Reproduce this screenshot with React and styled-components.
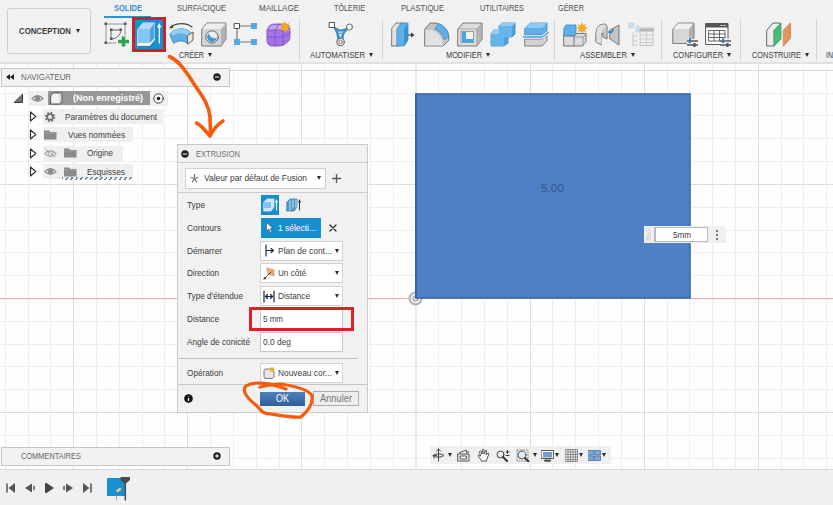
import React from "react";
import styled, { createGlobalStyle, css } from "styled-components";

const Global = createGlobalStyle`
  * { box-sizing: border-box; }
  html, body { margin: 0; padding: 0; overflow: hidden; }
  body { font-family: "Liberation Sans", Arial, sans-serif; font-size: 10px; color: #3c3c3c; }
  svg { display: block; flex: none; }
`;

/* ---------- text ---------- */

const FitBox = styled.span`
  display: block;
  flex: none;
  height: 12px;
  line-height: 12px;
  white-space: nowrap;
`;
const FitInner = styled.span`
  display: block;
  width: max-content;
  transform-origin: 0 50%;
  font-size: ${(p) => p.$size}px;
  font-weight: ${(p) => (p.$bold ? 700 : 400)};
  color: ${(p) => p.$color || "inherit"};
`;
const measure = (text, size, bold) => {
  const ctx = document.createElement("canvas").getContext("2d");
  ctx.font = `${bold ? "bold " : ""}${size}px "Liberation Sans"`;
  return ctx.measureText(text).width;
};
/* Label condensed to a set width */
const Label = ({ w, size = 9.4, bold, color, children }) => {
  const scale = w / measure(children, size, bold);
  return (
    <FitBox style={{ width: w }}>
      <FitInner $size={size} $bold={bold} $color={color} style={{ transform: `scaleX(${scale})` }}>
        {children}
      </FitInner>
    </FitBox>
  );
};

const Caret = styled.i`
  flex: none;
  width: 0;
  height: 0;
  border-left: 2.5px solid transparent;
  border-right: 2.5px solid transparent;
  border-top: 4px solid #2d2d2d;
`;

/* ---------- ribbon ---------- */

const Page = styled.div`
  position: relative;
  width: 833px;
  height: 505px;
  display: flex;
  flex-direction: column;
  overflow: hidden;
  background: #fff;
`;
const Ribbon = styled.header`
  flex: none;
  height: 64px;
  display: flex;
  background: #f1f1f1;
  border-bottom: 2px solid #e2e2e2;
  overflow: hidden;
`;
const Workspace = styled.button`
  flex: none;
  width: 84px;
  height: 46px;
  margin: 8px 9px 0 7px;
  padding: 0 0 0 11px;
  display: flex;
  align-items: center;
  gap: 5px;
  background: #f2f2f2;
  border: 1px solid #cfcfcf;
  border-radius: 3px;
  font-family: inherit;
  color: #3a3a3a;
`;
const RibbonMain = styled.div`
  flex: none;
  width: 733px;
  display: flex;
  flex-direction: column;
`;
const Tabs = styled.nav`
  display: flex;
  height: 18px;
  padding-left: 4px;
`;
const Tab = styled.div`
  flex: none;
  height: 18px;
  width: ${(p) => p.$w}px;
  padding: 2px 0 0 ${(p) => p.$pad}px;
  ${(p) => p.$on && css`border-bottom: 2px solid #2f95cc;`}
`;
const Groups = styled.div`
  display: flex;
  height: 44px;
`;
const Group = styled.section`
  flex: none;
  width: ${(p) => p.$w}px;
  display: flex;
  flex-direction: column;
  ${(p) => !p.$open && css`
    background: linear-gradient(#d4d4d4, #d4d4d4) no-repeat right 0 top 2px / 1px 40px;
  `}
`;
const Tools = styled.div`
  display: flex;
  height: 31px;
  padding-left: ${(p) => p.$pad}px;
  gap: ${(p) => p.$gap}px;
  align-items: center;
`;
const GroupName = styled.div`
  display: flex;
  align-items: center;
  gap: 4px;
  height: 12px;
  padding-left: ${(p) => p.$pad}px;
`;
const ActiveTool = styled.div`
  flex: none;
  width: 34px;
  height: 35px;
  margin: 1px -4px 0;
  display: flex;
  align-items: center;
  justify-content: center;
  background: #1590d0;
  border: 3px solid #cf1f27;
`;

const B = "#5fb0e8";
const BD = "#3c84bb";
const G = "#dcdcdc";
const GD = "#5d5d5d";

const Svg = ({ w = 26, h = 26, children }) => (
  <svg width={w} height={h} viewBox={`0 0 ${w} ${h}`} fill="none" strokeLinejoin="round" strokeLinecap="round">
    {children}
  </svg>
);

const SketchIcon = () => (
  <Svg w={26}>
    <path d="M3 3H22M3 3V22M22 3V14M3 22H13" stroke="#8b8b8b" strokeWidth=".9" />
    <path d="M8 9H18M8 9V18M18 9C17.500 14 14 18 8 18" stroke="#666" />
    {[[1.500, 1.500], [21, 1.500], [1.500, 20.500], [7, 7.500], [16.500, 7.500], [7, 16.500]].map(([x, y]) => (
      <rect key={`${x}-${y}`} x={x} y={y} width="2.500" height="2.500" fill="#555" />
    ))}
    <path d="M20.500 15.500V25.500M15 20.500H26" stroke="#2fa350" strokeWidth="3.600" strokeLinecap="butt" />
  </Svg>
);
const ExtrudeIcon = () => (
  <Svg w={28} h={29}>
    <path d="M3 9L8 3H19.500V20L15 26H3Z" fill="#f1f3f4" stroke="#dbe9f2" />
    <path d="M3 9L8 3H19.500V18L15 23H3Z" fill="#4fa3de" />
    <path d="M3 9L8 3H19.500L15 9Z" fill="#b4dcf6" />
    <path d="M3 9H15V23H3Z" fill="#82c6f2" />
    <path d="M3 26.500H15L20 20.500" stroke="#496f86" />
    <path d="M24.300 23V6" stroke="#fff" strokeWidth="1.300" />
    <path d="M22 7.500L24.300 3L26.600 7.500Z" fill="#fff" />
  </Svg>
);
const RevolveIcon = () => (
  <Svg>
    <path d="M2 13C7 6 19 6 24 13L20 23C16 19 11 19 6 22Z" fill={B} stroke={BD} />
    <path d="M2 13C7 6 19 6 24 13L20 15C16 11.500 10 11.500 6 14.500Z" fill="#92cdf4" />
    <path d="M19.500 14.500L25 11V19L20 23Z" fill="#e8e8e8" stroke={GD} />
    <path d="M3 6C9 1.500 18 1.500 24 6" stroke="#444" strokeWidth="1.200" />
    <path d="M1 7.500L4 3.500L5.500 7Z" fill="#444" />
  </Svg>
);
const HoleIcon = () => (
  <Svg>
    <path d="M1 8L6 2H25V18L20 25H1Z" fill="#d4d4d4" stroke="#777" />
    <path d="M1.500 8L6 2.500H24.500L20 8Z" fill="#ededed" />
    <path d="M20 8L24.500 3V18L20 24Z" fill="#b2b2b2" />
    <circle cx="11" cy="16" r="6.200" fill="#eee" stroke="#666" />
    <path d="M7.500 12.500A5 5 0 1 0 16 17C11.500 18 9.500 16 7.500 12.500Z" fill="#4298d5" />
  </Svg>
);
const PatternIcon = () => (
  <Svg>
    <path d="M4 5H22M4 5V21H22" stroke="#777" strokeWidth="1.200" />
    <rect x="1.500" y="2.500" width="5" height="5" fill="#fff" stroke="#555" />
    {[[18, 2], [1, 18], [18, 18]].map(([x, y]) => (
      <rect key={`${x}${y}`} x={x} y={y} width="6" height="6" fill="#55aae3" />
    ))}
  </Svg>
);
const star = "M0-6L1.500-2.600L4.300-4.300L2.900-1.300L6 0L2.900 1.300L4.300 4.300L1.500 2.900L0 6L-1.500 2.900L-4.300 4.300L-2.900 1.300L-6 0L-2.900-1.300L-4.300-4.300L-1.500-2.600Z";
const FormIcon = () => (
  <Svg>
    <path d="M1 9Q3 3 8 3H20Q24 4 24 8V17Q24 20 19 23Q17 25 12 25H5Q1 24 1 20Z" fill="#a272e6" stroke="#7c52b8" strokeWidth=".8" />
    <path d="M2 9Q4 4 8 4H19L16 9Z" fill="#c4a3f2" />
    <path d="M1 16H17L24 12M9 25V9L13 3M17 9V24M2 9H17L22 5" stroke="#7a4fc0" strokeWidth=".8" />
    <path d={star} transform="translate(19 6)" fill="#f5a623" />
  </Svg>
);
const AutomateIcon = () => (
  <Svg>
    <path d="M5 5Q9 9 9.500 13L11 21H14L15 13Q17 9 21 7Q16 9.500 12.500 9.500Q8 9 5 5Z" stroke="#3f8fc4" strokeWidth="2.200" fill="#a9d6f0" />
    <path d="M10.500 12.500H14.500L12.500 17Z" fill="#f1f1f1" stroke="#3f8fc4" strokeWidth=".8" />
    <rect x="1.500" y="1.500" width="5" height="5" fill="#fff" stroke="#555" />
    <circle cx="21.500" cy="6" r="3" fill="#fff" stroke="#666" />
    <circle cx="12.500" cy="21" r="3.800" fill="#ddd" stroke="#666" />
    <circle cx="12.500" cy="21" r="1.600" fill="#fff" stroke="#777" strokeWidth=".8" />
  </Svg>
);
const PressPullIcon = () => (
  <Svg>
    <path d="M1 7L5 2H12V19L8 25H1Z" fill="#e2e2e2" stroke={GD} strokeWidth=".8" />
    <path d="M6 8L10 2H17V19L13 25H6Z" fill={B} stroke={BD} strokeWidth=".7" />
    <path d="M13 8L17 2V19L13 25Z" fill="#3b94d3" />
    <path d="M17 14H21" stroke="#333" strokeWidth="1.200" />
    <path d="M20 11.500L23.500 14L20 16.500Z" fill="#333" />
  </Svg>
);
const FilletIcon = () => (
  <Svg>
    <path d="M1 8L6 2H12Q25 5 25 19L19 25H1Z" fill="#c4c4c4" stroke="#6b6b6b" strokeWidth=".9" />
    <path d="M1.500 9H8Q18 12 19 24.500H1.500Z" fill="#e1e1e1" />
    <path d="M11 8L14.500 2.500Q24 6 25 16L20 18.500Q18 11 11 8Z" fill={B} stroke={BD} strokeWidth=".7" />
  </Svg>
);
const ShellIcon = () => (
  <Svg>
    <path d="M1 8L6 2H25V18L20 25H1Z" fill="#dcdcdc" stroke="#6b6b6b" strokeWidth=".9" />
    <path d="M20 8L25 2V18L20 25ZM1 8H20" fill="#b5b5b5" stroke="#999" strokeWidth=".7" />
    <rect x="4.500" y="10.500" width="12" height="11" fill="#f3f3f3" stroke="#888" strokeWidth=".8" />
    <path d="M5 11V21.500H16.500V18H9V11Z" fill="#4ca5e0" />
  </Svg>
);
const CombineIcon = () => (
  <Svg>
    <path d="M9 5L12 2H25V13L22 16H18V22L14 25H1V13L4 9H9Z" fill="#4ca2de" stroke={BD} strokeWidth=".8" />
    <path d="M9 5L12 2H25L22 5ZM1 13L4 9H9V13Z" fill="#93cdf3" />
    <path d="M9 5H22V16H14V25H1V13H9Z" fill="#64b4e9" />
  </Svg>
);
const SplitIcon = () => (
  <Svg>
    <path d="M2 7L7 2H24V10L19 14H2Z" fill={B} stroke={BD} strokeWidth=".8" />
    <path d="M2 7L7 2H24L19 7Z" fill="#8bcbf4" />
    <path d="M2 18H19L24 14V20L19 25H2Z" fill="#d2d2d2" stroke="#777" strokeWidth=".9" />
    <path d="M0 16H19L26 11" stroke="#f7fbff" strokeWidth="3" />
    <path d="M0 16H19L26 11" stroke="#3c9ddd" strokeWidth="1.300" />
  </Svg>
);
const NewCompIcon = () => (
  <Svg>
    <path d="M2 7L4 4H14V15H2Z" fill={B} stroke={BD} strokeWidth=".8" />
    <path d="M2 15H12V25H2ZM12 15L15 12.500H24V21L20 25H12" fill={G} stroke="#777" />
    <path d="M12 16H21V25M21 16L24 13" stroke="#888" strokeWidth=".8" />
    <path d={star} transform="translate(20 7)" fill="#f5a623" />
  </Svg>
);
const JointIcon = () => (
  <Svg>
    <path d="M1 11Q2 3 9 3Q13 3 12 9V18L8 16V12Q7 12 6 15V24L1 21Z" fill="#c9c9c9" stroke="#777" />
    <path d="M1.500 11Q2 3.500 9 3.500L11.500 6Q7 6 6 14V23L1.500 21Z" fill="#e0e0e0" />
    <path d="M15 9L24 4V24L15 18Z" fill="#c4c4c4" stroke="#777" />
    <path d="M14 11Q17 12 18 9" stroke="#2d8bce" strokeWidth="2" />
  </Svg>
);
const BomIcon = () => (
  <Svg>
    <g opacity=".42">
      <path d="M1 2H6V7H1ZM8 5H11V11H7" fill="#8fc8ec" stroke="#83aac4" strokeWidth=".7" />
      <path d="M5 12V25M5 15H9M5 20H9M5 24H9" stroke="#888" strokeDasharray="1.500 1" />
      <rect x="12.500" y="7" width="12.500" height="17.500" fill="#eee" stroke="#888" />
      <path d="M12.500 9H25" stroke="#666" strokeWidth="3" />
      <path d="M13 14H25M13 18H25M13 21.500H25M18.500 10V24" stroke="#999" />
    </g>
  </Svg>
);
const Sliders = () => (
  <g strokeLinecap="butt">
    <path d="M15 20H26M15 24H26" stroke="#555" strokeWidth="1.300" />
    <path d="M18 17.500V22" stroke="#267fc4" strokeWidth="2" />
    <path d="M22.500 22V26" stroke="#4b4b4b" strokeWidth="2" />
  </g>
);
const ConfigIcon = () => (
  <Svg>
    <path d="M1 8L6 2H22V17L17 22.500H1Z" fill="#b1b1b1" stroke="#777" strokeWidth=".9" />
    <path d="M1.500 8L6 2.500H21.500L17 8Z" fill="#f0f0f0" />
    <path d="M1.500 8H17V22H1.500Z" fill="#d7d7d7" />
    <path d="M15 18H26V26H15Z" fill="#f1f1f1" />
    <Sliders />
  </Svg>
);
const ConfigTableIcon = () => (
  <Svg>
    <rect x="1" y="2.500" width="22" height="21" fill="#fff" stroke="#555" />
    <path d="M1 4.500H23" stroke="#555" strokeWidth="4" strokeLinecap="butt" />
    <path d="M16 4.500H17M19 4.500H20" stroke="#fff" />
    <path d="M4 9.500H20V20H4ZM4 13H20M4 16.500H20M9 9.500V20M14.500 9.500V20" stroke="#666" />
    <path d="M15 17.500H26V26H15Z" fill="#f1f1f1" />
    <Sliders />
  </Svg>
);
const PlaneIcon = () => (
  <Svg>
    <path d="M1 9L7 2H14V18L8 25H1Z" fill="#ededed" stroke="#666" />
    <path d="M8 9L15 2V18L8 25Z" fill="#45bd75" stroke="#37945d" strokeWidth=".7" />
    <path d="M17.500 9L24.500 2V17L17.500 25Z" fill="#e5935c" stroke="#bd7141" strokeWidth=".7" />
  </Svg>
);

/* ---------- canvas ---------- */

const Canvas = styled.main`
  position: relative;
  flex: none;
  height: 405px;
  background: #fefefe;
  overflow: hidden;
`;
const Scene = styled.div`
  position: absolute;
  inset: 0;
`;
const STEP = 22.82;
const gridLines = (origin, from, to) => {
  const out = [];
  for (let k = -20; k <= 20; k++) {
    const p = origin + k * STEP;
    if (p > from && p < to && k !== 0) out.push({ p: Math.round(p) + 0.5, major: k % 5 === 0 });
  }
  return out;
};
const GridDrawing = () => (
  <svg width="833" height="405" viewBox="0 64 833 405" fill="none">
    {gridLines(415.5, 0, 833).map(({ p, major }) => (
      <path key={`v${p}`} d={`M${p} 64V469`} stroke={major ? "#dcdcdc" : "#eeeeee"} />
    ))}
    {gridLines(298, 64, 469).map(({ p, major }) => (
      <path key={`h${p}`} d={`M0 ${p}H833`} stroke={major ? "#dcdcdc" : "#eeeeee"} />
    ))}
    <path d="M0 298.500H833" stroke="#f2a9a9" />
    <path d="M416 64V469" stroke="#b5ebb0" />
    <circle cx="415.500" cy="298.500" r="6" stroke="#b3b3b3" strokeWidth="2" fill="#eee" />
    <circle cx="415.500" cy="298.500" r="2.500" stroke="#888" />
    <rect x="416" y="94" width="274" height="204" fill="#4f80c5" stroke="#396ab0" strokeWidth="1.600" />
    <path d="M416 93.500V298.500" stroke="#3163ad" strokeWidth="2" />
  </svg>
);
const DimText = styled.div`
  position: absolute;
  left: 541px;
  top: 118px;
  color: #345488;
`;
const ValueBox = styled.div`
  position: absolute;
  left: 644px;
  top: 162px;
  width: 82px;
  height: 17px;
  display: flex;
  align-items: center;
  background: #f0f0f0;
`;
const Grip = styled.div`
  width: 11px;
  height: 15px;
  border-right: 1px solid #bbb;
  background: repeating-linear-gradient(135deg, #f2f2f2 0 1px, #d3d3d3 1px 2px) no-repeat 2px 0 / 5px 15px;
`;
const ValueInput = styled.div`
  width: 53px;
  height: 15px;
  padding: 1px 0 0 17px;
  background: #fff;
  border: 1px solid #b9b9b9;
`;
const Dots = styled.div`
  display: flex;
  flex-direction: column;
  gap: 2px;
  margin-left: 8px;
  i { width: 2px; height: 2px; background: #777; }
`;

/* ---------- browser panel ---------- */

const PanelBar = styled.div`
  width: 229px;
  height: 19px;
  display: flex;
  align-items: center;
  padding: 0 8px 1px 4px;
  background: #f2f2f2;
  border: 1px solid #c6c6c6;
  justify-content: space-between;
`;
const BarLeft = styled.div`
  display: flex;
  align-items: center;
  gap: 7px;
  padding-left: ${(p) => p.$pad || 0}px;
`;
const Navigator = styled.aside`
  position: absolute;
  left: 1px;
  top: 4px;
  display: flex;
  flex-direction: column;
  gap: 2px;
`;
const Comments = styled.aside`
  position: absolute;
  left: 1px;
  top: 383px;
`;
const Tree = styled.div`
  display: flex;
  flex-direction: column;
`;
const Node = styled.div`
  display: flex;
  align-items: center;
  height: 18.4px;
  padding-left: ${(p) => p.$indent}px;
`;
const NodeBody = styled.div`
  display: flex;
  align-items: center;
  height: 15px;
  width: ${(p) => p.$w}px;
  margin-left: ${(p) => p.$ml}px;
  padding-left: ${(p) => p.$pad || 0}px;
  gap: ${(p) => p.$gap}px;
  background: #efefef;
`;
const RootChip = styled.div`
  display: flex;
  align-items: center;
  gap: 10px;
  width: 102px;
  height: 14px;
  padding-left: 2px;
  background: #979797;
`;
const FolderText = styled.div`
  display: flex;
  align-items: center;
  gap: 10px;
`;
const Hatched = styled(FolderText)`
  position: relative;
  height: 14px;
  &::after {
    content: "";
    position: absolute;
    left: -2px;
    bottom: -1px;
    width: 71px;
    height: 3px;
    background: repeating-linear-gradient(125deg, #6b87a0 0 1.5px, transparent 1.5px 4px);
  }
`;

const Round = ({ sign }) => (
  <Svg w={8} h={8}>
    <circle cx="4" cy="4" r="3.700" fill="#1f1f1f" />
    <path d={sign === "+" ? "M2 4H6M4 2V6" : "M2 4H6"} stroke="#fff" strokeLinecap="butt" />
  </Svg>
);
const Twist = () => (
  <Svg w={8} h={11}>
    <path d="M1.500 1V10L6.800 5.500Z" fill="#fff" stroke="#333" strokeWidth="1.200" />
  </Svg>
);
const Eye = ({ off }) => (
  <Svg w={13} h={9}>
    <path d="M1 4.500Q6.500-1 12 4.500Q6.500 10 1 4.500Z" fill={off ? "#fafafa" : "#eee"} stroke={off ? "#aaa" : "#909090"} strokeWidth="1.200" />
    <circle cx="6.500" cy="4.500" r="2.200" fill={off ? "#fff" : "#8c8c8c"} stroke={off ? "#aaa" : "#8c8c8c"} />
    {off && <path d="M2 1L11 8" stroke="#999" />}
  </Svg>
);
const Folder = () => (
  <Svg w={13} h={10}>
    <path d="M0 .5H5L6.500 2H12.500V9.500H0Z" fill="#8a8a8a" />
    <path d="M0 3H12.500" stroke="#a9a9a9" strokeWidth=".7" />
  </Svg>
);
const Gear = () => (
  <Svg w={12} h={12}>
    <circle cx="6" cy="6" r="4.200" stroke="#707070" strokeWidth="2" strokeDasharray="1.700 1.600" strokeLinecap="butt" />
    <circle cx="6" cy="6" r="2.900" stroke="#707070" strokeWidth="1.800" />
  </Svg>
);

/* ---------- dialog ---------- */

const Dialog = styled.section`
  position: absolute;
  left: 177px;
  top: 80px;
  width: 191px;
  height: 269px;
  display: flex;
  flex-direction: column;
  background: #f1f1f1;
  border: 1px solid #c9c9c9;
`;
const DialogHead = styled.div`
  flex: none;
  height: 18px;
  display: flex;
  align-items: center;
  gap: 7px;
  padding-left: 3px;
  border-bottom: 1px solid #c9c9c9;
`;
const Preset = styled.div`
  flex: none;
  height: 30px;
  display: flex;
  align-items: center;
  gap: 6px;
  padding: 1px 0 0 7px;
  border-bottom: 1px solid #cdcdcd;
`;
const PresetSelect = styled.div`
  width: 141px;
  height: 21px;
  display: flex;
  align-items: center;
  gap: 5px;
  padding-left: 4px;
  background: #fff;
  border: 1px solid #d0d0d0;
`;
const Rows = styled.div`
  flex: none;
  display: flex;
  flex-direction: column;
  padding-top: 0.3px;
`;
const Row = styled.div`
  height: 22.9px;
  display: flex;
  align-items: center;
  padding-left: 9px;
`;
const RowName = styled.div`
  flex: none;
  width: 73px;
`;
const Field = styled.div`
  width: 83px;
  height: 20px;
  display: flex;
  align-items: center;
  justify-content: space-between;
  padding: 0 3px 0 2px;
  background: #fff;
  border: 1px solid ${(p) => (p.$input ? "#c6c6c6" : "#d2d2d2")};
`;
const FieldText = styled.div`
  display: flex;
  align-items: center;
  gap: 3px;
`;
const TypeButton = styled.div`
  width: 18px;
  height: 20px;
  margin: 0 4px 0 1px;
  display: flex;
  align-items: center;
  justify-content: center;
  ${(p) => p.$on && css`background: #1490d1;`}
`;
const Selection = styled.div`
  width: 60px;
  height: 20px;
  margin: 0 8px 0 1px;
  display: flex;
  align-items: center;
  gap: 5px;
  padding-left: 5px;
  background: #1490d1;
`;
const Divider = styled.hr`
  width: 179px;
  height: 1px;
  margin: 4px 0 3px 1px;
  border: 0;
  background: #bebebe;
`;
const Footer = styled.div`
  margin-top: auto;
  height: 29px;
  display: flex;
  align-items: center;
  padding-left: 6px;
  border-top: 1px solid #c6c6c6;
`;
const OkButton = styled.div`
  width: 45px;
  height: 14px;
  margin: 0 8px 0 67px;
  display: flex;
  align-items: center;
  justify-content: center;
  background: linear-gradient(#4d80b8, #2f609a);
`;
const CancelButton = styled.div`
  width: 46px;
  height: 15px;
  display: flex;
  align-items: center;
  justify-content: center;
  background: #ededed;
  border: 1px solid #adadad;
`;

const SmallExtrude = ({ thin }) => (
  <Svg w={15} h={14}>
    <path d="M1 4L4 1H11V9L8 13H1Z" fill={thin ? "#4b9bd0" : "#cde6f7"} stroke={thin ? "#52758b" : "#dcecf6"} strokeWidth=".8" />
    {thin ? <path d="M4 3V12M7 2V10M10 2V9" stroke="#c9e5f5" /> : <path d="M1 4H8V10H1Z" fill="#80c3ee" />}
    <path d="M13.500 12V4" stroke={thin ? "#333" : "#fff"} />
    <path d="M12 4.500L13.500 1L15 4.500Z" fill={thin ? "#333" : "#fff"} />
  </Svg>
);
const StartIcon = () => (
  <Svg w={12} h={13}>
    <path d="M3 1V12M4 6.500H10M8 4.500L10.500 6.500L8 8.500" stroke="#172945" strokeWidth="1.200" />
  </Svg>
);
const SideIcon = () => (
  <Svg w={12} h={13}>
    <path d="M4 1L11 3V9L5 7Z" fill="#f0a878" stroke="#cf8350" strokeWidth=".6" />
    <path d="M1 12L8 5" stroke="#444" />
    <path d="M.5 12.500L1 9.500L3.500 12Z" fill="#444" />
  </Svg>
);
const ExtentIcon = () => (
  <Svg w={12} h={13}>
    <path d="M1 1V12M11 1V12M2.500 6.500H9.500M4.500 4.500L2.500 6.500L4.500 8.500M7.500 4.500L9.500 6.500L7.500 8.500" stroke="#172945" strokeWidth="1.200" />
  </Svg>
);
const BodyIcon = () => (
  <Svg w={12} h={13}>
    <path d="M1 4Q1 3 3 3H9L11 6V11Q10 12.500 8 12.500H3Q1 12.500 1 11Z" fill="#e6e6e6" stroke="#777" />
    <path d={star} transform="translate(9 3.500) scale(.55)" fill="#f5a623" />
  </Svg>
);

const SelectRow = ({ name, nameW, icon, value, valueW }) => (
  <Row>
    <RowName><Label w={nameW}>{name}</Label></RowName>
    <Field>
      <FieldText>{icon}<Label w={valueW}>{value}</Label></FieldText>
      <Caret />
    </Field>
  </Row>
);
const InputRow = ({ name, nameW, value, valueW }) => (
  <Row>
    <RowName><Label w={nameW}>{name}</Label></RowName>
    <Field $input><Label w={valueW}>{value}</Label></Field>
  </Row>
);

/* ---------- view tools, timeline ---------- */

const ViewBar = styled.div`
  position: absolute;
  left: 430px;
  top: 382px;
  width: 181px;
  height: 18px;
  display: flex;
  align-items: center;
  padding-left: 2px;
  background: #f0f0f0;
`;
const ViewTool = styled.div`
  flex: none;
  width: ${(p) => p.$w}px;
  display: flex;
  align-items: center;
  gap: ${(p) => p.$gap || 1}px;
`;
const Timeline = styled.footer`
  flex: none;
  height: 36px;
  display: flex;
  align-items: center;
  padding-left: 6px;
  background: #f0f0f0;
  border-top: 1px solid #d9d9d9;
`;
const Player = styled.div`
  display: flex;
  gap: 9px;
  width: 100px;
`;
const Marks = styled.svg`
  position: absolute;
  left: 0;
  top: 0;
  pointer-events: none;
`;
const RedFrame = styled.div`
  position: absolute;
  left: 249px;
  top: 307px;
  width: 105px;
  height: 24px;
  border: 3px solid #dc2027;
`;

const TABS = [
  ["SOLIDE", 47, 10, 28],
  ["SURFACIQUE", 84, 26, 49],
  ["MAILLAGE", 76, 24, 40],
  ["TÔLERIE", 64, 23, 31],
  ["PLASTIQUE", 79, 26, 43],
  ["UTILITAIRES", 78, 26, 44],
  ["GÉRER", 60, 26, 26],
];
const GROUPS = [
  { w: 200, name: "CRÉER", tw: 25, npad: 79, pad: 3, gap: 6.5, icons: [SketchIcon, "active", RevolveIcon, HoleIcon, PatternIcon, FormIcon] },
  { w: 83, name: "AUTOMATISER", tw: 55, npad: 10, pad: 28, gap: 7, icons: [AutomateIcon] },
  { w: 172, name: "MODIFIER", tw: 36, npad: 63, pad: 8, gap: 7, icons: [PressPullIcon, FilletIcon, ShellIcon, CombineIcon, SplitIcon] },
  { w: 107, name: "ASSEMBLER", tw: 47, npad: 25, pad: 7, gap: 7, icons: [NewCompIcon, JointIcon, BomIcon] },
  { w: 79, name: "CONFIGURER", tw: 50, npad: 11, pad: 10, gap: 7, icons: [ConfigIcon, ConfigTableIcon] },
  { w: 76, name: "CONSTRUIRE", tw: 49, npad: 11, pad: 25, gap: 7, icons: [PlaneIcon] },
  { w: 16, name: "IN", tw: 7, npad: 9, pad: 0, gap: 0, icons: [], open: true },
];

export default function App() {
  return (
    <>
      <Global />
      <Page>
        <Ribbon>
          <Workspace><Label w={52} bold>CONCEPTION</Label><Caret /></Workspace>
          <RibbonMain>
            <Tabs>
              {TABS.map(([t, w, pad, tw], i) => (
                <Tab key={t} $w={w} $pad={pad} $on={i === 0}>
                  <Label w={tw} bold={i === 0} color={i === 0 ? "#2f95cc" : "#505050"}>{t}</Label>
                </Tab>
              ))}
            </Tabs>
            <Groups>
              {GROUPS.map((g) => (
                <Group key={g.name} $w={g.w} $open={g.open}>
                  <Tools $pad={g.pad} $gap={g.gap}>
                    {g.icons.map((Icon, i) =>
                      Icon === "active" ? <ActiveTool key={i}><ExtrudeIcon /></ActiveTool> : <Icon key={i} />
                    )}
                  </Tools>
                  <GroupName $pad={g.npad}><Label w={g.tw}>{g.name}</Label>{!g.open && <Caret />}</GroupName>
                </Group>
              ))}
            </Groups>
          </RibbonMain>
        </Ribbon>

        <Canvas>
          <Scene><GridDrawing /></Scene>
          <DimText><Label w={23} size={11.6}>5.00</Label></DimText>

          <Navigator>
            <PanelBar>
              <BarLeft>
                <Svg w={8} h={6}><path d="M4 0V6L0 3ZM8 0V6L4 3Z" fill="#222" /></Svg>
                <Label w={50} color="#666">NAVIGATEUR</Label>
              </BarLeft>
              <Round sign="-" />
            </PanelBar>
            <Tree>
              <Node $indent={13}>
                <Svg w={9} h={9}><path d="M8.500 .5V8.500H.5Z" fill="#777" stroke="#333" /></Svg>
                <NodeBody $ml={5} $w={140} $pad={3} $gap={3.5}>
                  <Eye />
                  <RootChip>
                    <Svg w={13} h={13}>
                      <path d="M1 3.500L3 1H12V9L10 12H1Z" fill="#f4f4f4" stroke="#555" />
                      <path d="M10 3.500V12M10 3.500L12 1" stroke="#aaa" strokeWidth=".7" />
                    </Svg>
                    <Label w={70} bold color="#fff">(Non enregistré)</Label>
                  </RootChip>
                  <Svg w={11} h={11}><circle cx="5.500" cy="5.500" r="4.700" fill="#fff" stroke="#444" /><circle cx="5.500" cy="5.500" r="1.800" fill="#222" /></Svg>
                </NodeBody>
              </Node>
              <Node $indent={28}><Twist />
                <NodeBody $ml={6} $w={120} $pad={1} $gap={9}><Gear /><Label w={92}>Paramètres du document</Label></NodeBody>
              </Node>
              <Node $indent={28}><Twist />
                <NodeBody $ml={6} $w={90} $pad={1} $gap={11}><Folder /><Label w={57}>Vues nommées</Label></NodeBody>
              </Node>
              <Node $indent={28}><Twist />
                <NodeBody $ml={6} $w={80} $pad={1} $gap={7}>
                  <Eye off /><FolderText><Folder /><Label w={26}>Origine</Label></FolderText>
                </NodeBody>
              </Node>
              <Node $indent={28}><Twist />
                <NodeBody $ml={6} $w={90} $pad={1} $gap={7}>
                  <Eye /><Hatched><Folder /><Label w={38}>Esquisses</Label></Hatched>
                </NodeBody>
              </Node>
            </Tree>
          </Navigator>

          <Dialog>
            <DialogHead><Round sign="-" /><Label w={44} color="#707070">EXTRUSION</Label></DialogHead>
            <Preset>
              <PresetSelect>
                <Svg w={9} h={9}><path d="M4.500 .5V4.500L1 3.500M4.500 4.500L8 3.500M4.500 4.500L2.300 8M4.500 4.500L6.700 8" stroke="#777" strokeWidth="1.200" /></Svg>
                <Label w={103}>Valeur par défaut de Fusion</Label>
                <span />
                <Caret />
              </PresetSelect>
              <Svg w={9} h={9}><path d="M4.500 .5V8.500M.5 4.500H8.500" stroke="#555" strokeWidth="1.300" /></Svg>
            </Preset>
            <Rows>
              <Row>
                <RowName><Label w={18}>Type</Label></RowName>
                <TypeButton $on><SmallExtrude /></TypeButton>
                <TypeButton><SmallExtrude thin /></TypeButton>
              </Row>
              <Row>
                <RowName><Label w={34}>Contours</Label></RowName>
                <Selection>
                  <Svg w={7} h={11}><path d="M.5 .5V9L2.700 7L4.300 10.500L5.700 9.800L4.200 6.500H6.800Z" fill="#fff" stroke="#444" strokeWidth=".6" /></Svg>
                  <Label w={38} color="#fff">1 sélecti...</Label>
                </Selection>
                <Svg w={8} h={8}><path d="M1 1L7 7M7 1L1 7" stroke="#333" strokeWidth="1.400" /></Svg>
              </Row>
              <SelectRow name="Démarrer" nameW={35} icon={<StartIcon />} value="Plan de cont..." valueW={54} />
              <SelectRow name="Direction" nameW={32} icon={<SideIcon />} value="Un côté" valueW={28} />
              <SelectRow name="Type d'étendue" nameW={56} icon={<ExtentIcon />} value="Distance" valueW={32} />
              <InputRow name="Distance" nameW={32} value="5 mm" valueW={20} />
              <InputRow name="Angle de conicité" nameW={63} value="0.0 deg" valueW={28} />
              <Divider />
              <SelectRow name="Opération" nameW={36} icon={<BodyIcon />} value="Nouveau cor..." valueW={54} />
            </Rows>
            <Footer>
              <Svg w={9} h={9}><circle cx="4.500" cy="4.500" r="4.300" fill="#111" /><path d="M4.500 4V7M4.500 2V2.500" stroke="#fff" strokeWidth="1.300" strokeLinecap="butt" /></Svg>
              <OkButton><Label w={13} size={10} color="#fff">OK</Label></OkButton>
              <CancelButton><Label w={32} size={10} color="#777">Annuler</Label></CancelButton>
            </Footer>
          </Dialog>

          <ValueBox>
            <Grip />
            <ValueInput><Label w={18}>5mm</Label></ValueInput>
            <Dots><i /><i /><i /></Dots>
          </ValueBox>

          <Comments>
            <PanelBar>
              <BarLeft $pad={15}><Label w={60} color="#666">COMMENTAIRES</Label></BarLeft>
              <Round sign="+" />
            </PanelBar>
          </Comments>

          <ViewBar>
            <ViewTool $w={25} $gap={3}>
              <Svg w={13} h={14}><path d="M6.500 1V13M4.500 3L6.500 1L8.500 3M1 7.500Q6.500 4 12 7.500Q6.500 11 1 7.500M2 10V7.500H4.500" stroke="#444" /></Svg><Caret />
            </ViewTool>
            <ViewTool $w={20}>
              <Svg w={13} h={13}><path d="M1 5H12V12H1ZM2 4L9 1L10 4M10 3H12" fill="#eee" stroke="#555" /><rect x="3.500" y="7" width="6" height="3" fill="#fff" stroke="#555" /></Svg>
            </ViewTool>
            <ViewTool $w={19}>
              <Svg w={13} h={14}><path d="M4 12L1 7.500Q1.500 6 3.500 8L2.500 3.500Q3.500 2 4.500 4L5 6L5.500 1.500Q6.500 .5 7 2V6L8.500 2.500Q10 2 9.500 4L9 7L11 5Q12.500 5 11.500 7L9.500 12V13H4.500Z" fill="#fff" stroke="#444" strokeWidth=".9" /></Svg>
            </ViewTool>
            <ViewTool $w={20}>
              <Svg w={14} h={13}><circle cx="4.500" cy="5.500" r="3.500" fill="#e8f1f7" stroke="#444" /><path d="M7 8L11 12" stroke="#333" strokeWidth="2" /><path d="M10 3H13M11.500 1.500V4.500M10 6.500H13" stroke="#333" /></Svg>
            </ViewTool>
            <ViewTool $w={25} $gap={3}>
              <Svg w={14} h={13}><path d="M1 1H12V12H1Z" stroke="#777" strokeDasharray="1.500 1.500" strokeWidth=".8" /><circle cx="6" cy="6" r="4" fill="#dcedf8" stroke="#555" /><path d="M9 9L12.500 12.500" stroke="#333" strokeWidth="2" /></Svg><Caret />
            </ViewTool>
            <ViewTool $w={24}>
              <Svg w={13} h={13}><path d="M.5 1.500H12.500V9.500H.5ZM4 12H9" fill="#fff" stroke="#555" /><rect x="2" y="3" width="9" height="5.500" fill="#6f9ed1" /><path d="M4 11.500H9" stroke="#555" strokeWidth="2" /></Svg><Caret />
            </ViewTool>
            <ViewTool $w={23}>
              <Svg w={13} h={13}><path d="M.5 .5H12.500V12.500H.5ZM3 0V13M5.500 0V13M8 0V13M10.500 0V13M0 3H13M0 5.500H13M0 8H13M0 10.500H13" stroke="#777" strokeWidth=".8" /></Svg><Caret />
            </ViewTool>
            <ViewTool $w={22}>
              <Svg w={13} h={11}><path d="M.5 .5H6V5H.5ZM7 .5H12.500V5H7ZM.5 6H6V10.500H.5ZM7 6H12.500V10.500H7Z" fill="#7ba9dc" stroke="#4a6e9b" strokeWidth=".8" /></Svg><Caret />
            </ViewTool>
          </ViewBar>
        </Canvas>

        <Timeline>
          <Player>
            <Svg w={10} h={10}><path d="M1 1V9" stroke="#555" strokeWidth="1.500" /><path d="M9 0V10L2.500 5Z" fill="#555" /></Svg>
            <Svg w={10} h={10}><path d="M7 .5V9.500L0 5Z" fill="#555" /><path d="M9 3.500V6.500" stroke="#555" strokeWidth="1.500" /></Svg>
            <Svg w={10} h={10}><path d="M1 -1V11L10 5Z" fill="#444" /></Svg>
            <Svg w={10} h={10}><path d="M3 .5V9.500L10 5Z" fill="#555" /><path d="M1 3.500V6.500" stroke="#555" strokeWidth="1.500" /></Svg>
            <Svg w={10} h={10}><path d="M9 1V9" stroke="#555" strokeWidth="1.500" /><path d="M1 0V10L7.500 5Z" fill="#555" /></Svg>
          </Player>
          <Svg w={25} h={26}>
            <rect x="1" y="3" width="18" height="18" fill="#1590d0" />
            <path d="M10.500 21V25" stroke="#aaa" />
            <path d="M11.500 16L14 14" stroke="#f3c887" strokeWidth="2.500" />
            <path d="M14.500 2H24V5L20 8.500H18.500L14.500 5Z" fill="#4d4d4d" />
            <path d="M19.300 7V25" stroke="#4d4d4d" strokeWidth="1.500" />
          </Svg>
        </Timeline>

        <RedFrame />
        <Marks width="833" height="505" viewBox="0 0 833 505" fill="none" stroke="#f85a0b" strokeLinecap="round" strokeLinejoin="round">
          <path d="M169.500 56.500C179 61 186 71 194 84C203 97 209 105 210 117C210 124 211 130 210 135" strokeWidth="3.600" />
          <path d="M196.500 123C200 124 204 129 210 136C213 130 218 124 223 121" strokeWidth="3.600" />
          <path d="M286 389C273 384 255 380 246 386C241 391 248 399 257 406C261 410 262 414 271 414C283 416 294 418 301 417C308 411 313 403 312 396C309 389 294 386 281 384C273 384 264 386 260 387" strokeWidth="3.200" />
        </Marks>
      </Page>
    </>
  );
}
